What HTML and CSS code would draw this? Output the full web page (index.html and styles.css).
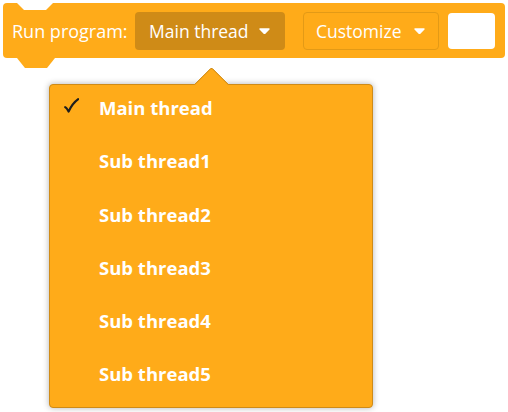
FILE: index.html
```html
<!DOCTYPE html>
<html>
<head>
<meta charset="utf-8">
<link rel="stylesheet" href="styles.css">
</head>
<body>
<div class="stage">
  <div class="block">
    <span class="label">Run program:</span>
    <div class="dd dd-dark">
      <span>Main thread</span>
      <svg class="caret" width="11" height="6" viewBox="0 0 11 6"><path d="M1 1 L10 1 L5.9 5.2 Q5.5 5.6 5.1 5.2 Z" fill="#fff" stroke="#fff" stroke-width="1.4" stroke-linejoin="round"/></svg>
    </div>
    <div class="dd dd-outline">
      <span>Customize</span>
      <svg class="caret" width="11" height="6" viewBox="0 0 11 6"><path d="M1 1 L10 1 L5.9 5.2 Q5.5 5.6 5.1 5.2 Z" fill="#fff" stroke="#fff" stroke-width="1.4" stroke-linejoin="round"/></svg>
    </div>
    <div class="swatch"></div>
  </div>
  <div class="menu">
    <div class="item"><span class="check"><svg width="15" height="16" viewBox="0 0 15 16"><path d="M1.2 9.2 Q2.6 9.6 4.6 13.6 Q8.2 5.6 14.2 1.2" fill="none" stroke="#1e1e1e" stroke-width="2.2" stroke-linecap="round" stroke-linejoin="round"/></svg></span><span>Main thread</span></div>
    <div class="item"><span class="check"></span><span>Sub thread1</span></div>
    <div class="item"><span class="check"></span><span>Sub thread2</span></div>
    <div class="item"><span class="check"></span><span>Sub thread3</span></div>
    <div class="item"><span class="check"></span><span>Sub thread4</span></div>
    <div class="item"><span class="check"></span><span>Sub thread5</span></div>
  </div>
</div>
</body>
</html>
```
FILE: styles.css
```css
html, body {
  margin: 0;
  padding: 0;
  background: #fff;
}
body {
  font-family: "Open Sans", "Noto Sans", sans-serif;
  width: 508px;
  height: 412px;
  overflow: hidden;
}
.stage {
  padding: 3px 0 0 3px;
}
.block {
  position: relative;
  width: 502px;
  height: 55px;
  box-sizing: border-box;
  background: #FFAB19;
  border-radius: 4px;
  display: flex;
  align-items: center;
  padding: 0 10px 0 9px;
  color: #fff;
}
.block::before {
  content: "";
  position: absolute;
  left: 13px;
  top: -1px;
  width: 38px;
  height: 8px;
  background: #fff;
  clip-path: polygon(0 0, 100% 0, 79% 100%, 21% 100%);
}
.block::after {
  content: "";
  position: absolute;
  left: 14px;
  top: 55px;
  width: 38px;
  height: 10px;
  background: #FFAB19;
  clip-path: polygon(0 0, 100% 0, 79% 100%, 21% 100%);
}
.label {
  font-size: 18px;
  width: 123px;
  white-space: nowrap;
}
.dd {
  height: 38px;
  box-sizing: border-box;
  border-radius: 4px;
  display: flex;
  align-items: center;
  font-size: 17.5px;
  white-space: nowrap;
}
.dd-dark {
  background: #CF8B17;
  width: 150px;
  padding: 0 15px 0 14px;
  justify-content: space-between;
  margin-right: 18px;
}
.dd-outline {
  width: 136px;
  border: 1px solid #E39A16;
  padding: 0 13px 0 12px;
  justify-content: space-between;
  margin-right: 9px;
}
.caret {
  display: block;
}
.swatch {
  width: 47px;
  height: 36px;
  background: #fff;
  border-radius: 4px;
}
.menu {
  position: relative;
  margin: 26px 0 0 46px;
  width: 324px;
  height: 324px;
  box-sizing: border-box;
  background: #FFAB19;
  border: 1px solid #CF8B17;
  border-radius: 4px;
  box-shadow: 0 0 6px rgba(0, 0, 0, 0.3);
  color: #fff;
}
.menu::before {
  content: "";
  position: absolute;
  left: 149px;
  top: -13px;
  width: 24px;
  height: 24px;
  background: #FFAB19;
  border-top: 1px solid #CF8B17;
  border-left: 1px solid #CF8B17;
  border-top-left-radius: 3px;
  transform: rotate(45deg);
}
.item {
  position: relative;
  height: 53.3px;
  line-height: 46px;
  display: flex;
  font-size: 18.5px;
  font-weight: 700;
  white-space: nowrap;
}
.check {
  width: 49px;
  padding: 13px 0 0 14px;
  box-sizing: border-box;
}
.check svg {
  display: block;
}
```
